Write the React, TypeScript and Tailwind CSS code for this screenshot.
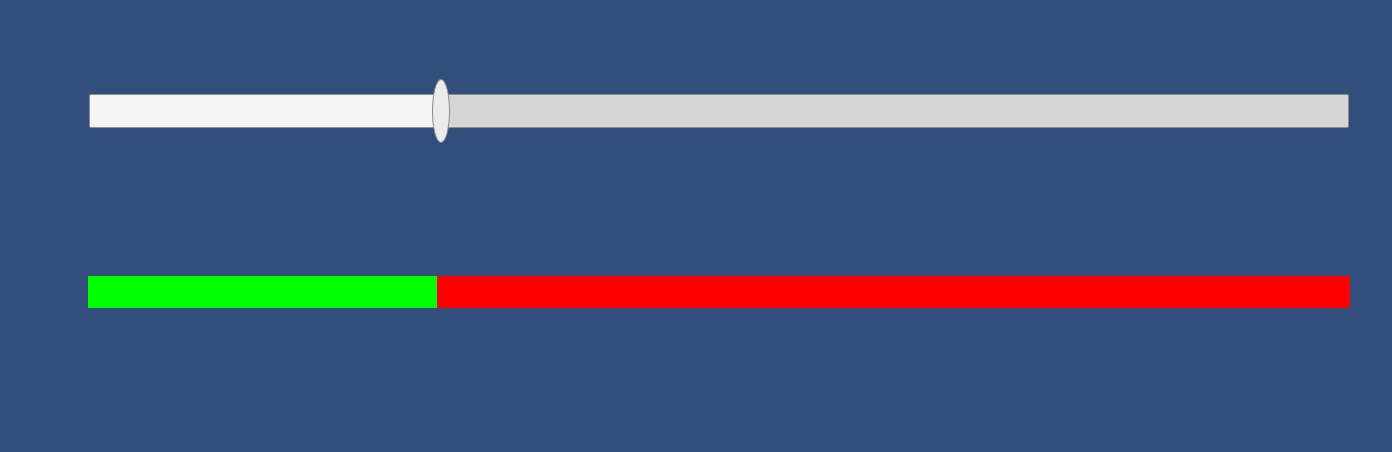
import React, { useState } from 'react';

// Level control: a range slider and a split bar showing the same value
const TRACK_W = 1260;
const THUMB_W = 18;

const LevelSlider: React.FC<{ value: number }> = ({ value }) => {
  const thumbLeft = (TRACK_W - THUMB_W) * value;
  const fillW = thumbLeft + THUMB_W / 2;

  return (
    <div className="relative h-[64px] px-px pt-[15px]">
      <div className="flex h-[34px] overflow-hidden rounded-[2px] border border-[#8c8c8c] bg-[#d5d5d5]">
        <div className="h-full bg-[#f4f4f4]" style={{ width: fillW }} />
      </div>
      <div
        className="absolute top-0 h-[64px] w-[18px] rounded-[50%] border border-[#8a8a8a] bg-[#ebebeb]"
        style={{ left: Math.round(thumbLeft) }}
      />
    </div>
  );
};

const SplitBar: React.FC<{ value: number }> = ({ value }) => (
  <div className="flex h-[32px] w-full">
    <div className="h-full bg-[#00ff00]" style={{ width: `${value * 100}%` }} />
    <div className="h-full flex-1 bg-[#ff0000]" />
  </div>
);

export default function App() {
  const [level] = useState(0.2766);

  return (
    <div className="h-[452px] w-[1392px] bg-[#314f7a] pl-[88px] pr-[42px] pt-[79px]">
      <LevelSlider value={level} />
      <div className="mt-[133px]">
        <SplitBar value={level} />
      </div>
    </div>
  );
}
